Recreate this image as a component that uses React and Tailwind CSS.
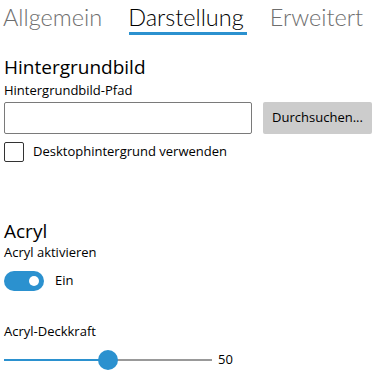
import React from 'react';

const font = { fontFamily: '"Open Sans", "Noto Sans", sans-serif' };
const tabFont = { fontFamily: 'Lato, "Open Sans", sans-serif' };

function Tabs() {
  return (
    <div className="flex items-start h-[40px] pl-[3px]" style={tabFont}>
      <div className="text-[23.5px] font-light text-[#6e6e6e] leading-[34px] mr-[26px]">Allgemein</div>
      <div className="flex flex-col mr-[26px]">
        <div className="text-[23.5px] font-light text-black leading-[34px]">Darstellung</div>
        <div className="h-[3px] bg-[#2b91cf] mt-[-2px] ml-[1px] mr-[-3px]" />
      </div>
      <div className="text-[23.5px] font-light text-[#6e6e6e] leading-[34px]">Erweitert</div>
    </div>
  );
}

export default function App() {
  return (
    <div className="w-[380px] h-[382px] bg-white text-black overflow-hidden" style={font}>
      <Tabs />
      <div className="pl-[4px] pt-[14px]">
        <div className="text-[19px] leading-[26px]">Hintergrundbild</div>
        <div className="text-[13px] leading-[18px] mt-[1px]">Hintergrundbild-Pfad</div>
        <div className="flex items-center gap-[11px] mt-[3px]">
          <div className="w-[248px] h-[32px] border border-[#7a7a7a] rounded-[2px]" />
          <button className="w-[109px] h-[32px] bg-[#cccccc] rounded-[2px] text-[13px] text-black">Durchsuchen...</button>
        </div>
        <div className="flex items-center mt-[8px]">
          <div className="w-[20px] h-[20px] border border-[#333] rounded-[2px]" />
          <span className="text-[13px] ml-[9px]">Desktophintergrund verwenden</span>
        </div>

        <div className="text-[19px] leading-[26px] mt-[56px]">Acryl</div>
        <div className="text-[13px] leading-[18px] mt-[-1px]">Acryl aktivieren</div>
        <div className="flex items-center mt-[10px]">
          <div className="w-[40px] h-[20px] rounded-full bg-[#2b91cf] flex items-center justify-end pr-[5px]">
            <div className="w-[10px] h-[10px] rounded-full bg-white" />
          </div>
          <span className="text-[13px] ml-[11px]">Ein</span>
        </div>

        <div className="text-[13px] leading-[18px] mt-[31px]">Acryl-Deckkraft</div>
        <div className="flex items-center mt-[9px]">
          <div className="relative w-[208px] h-[22px] flex items-center">
            <div className="w-[104px] h-[2px] bg-[#2b91cf]" />
            <div className="flex-1 h-[2px] bg-[#999999]" />
            <div className="absolute left-[94px] top-[1px] w-[20px] h-[20px] rounded-full bg-[#2b91cf]" />
          </div>
          <span className="text-[13px] ml-[6px]">50</span>
        </div>
      </div>
    </div>
  );
}
